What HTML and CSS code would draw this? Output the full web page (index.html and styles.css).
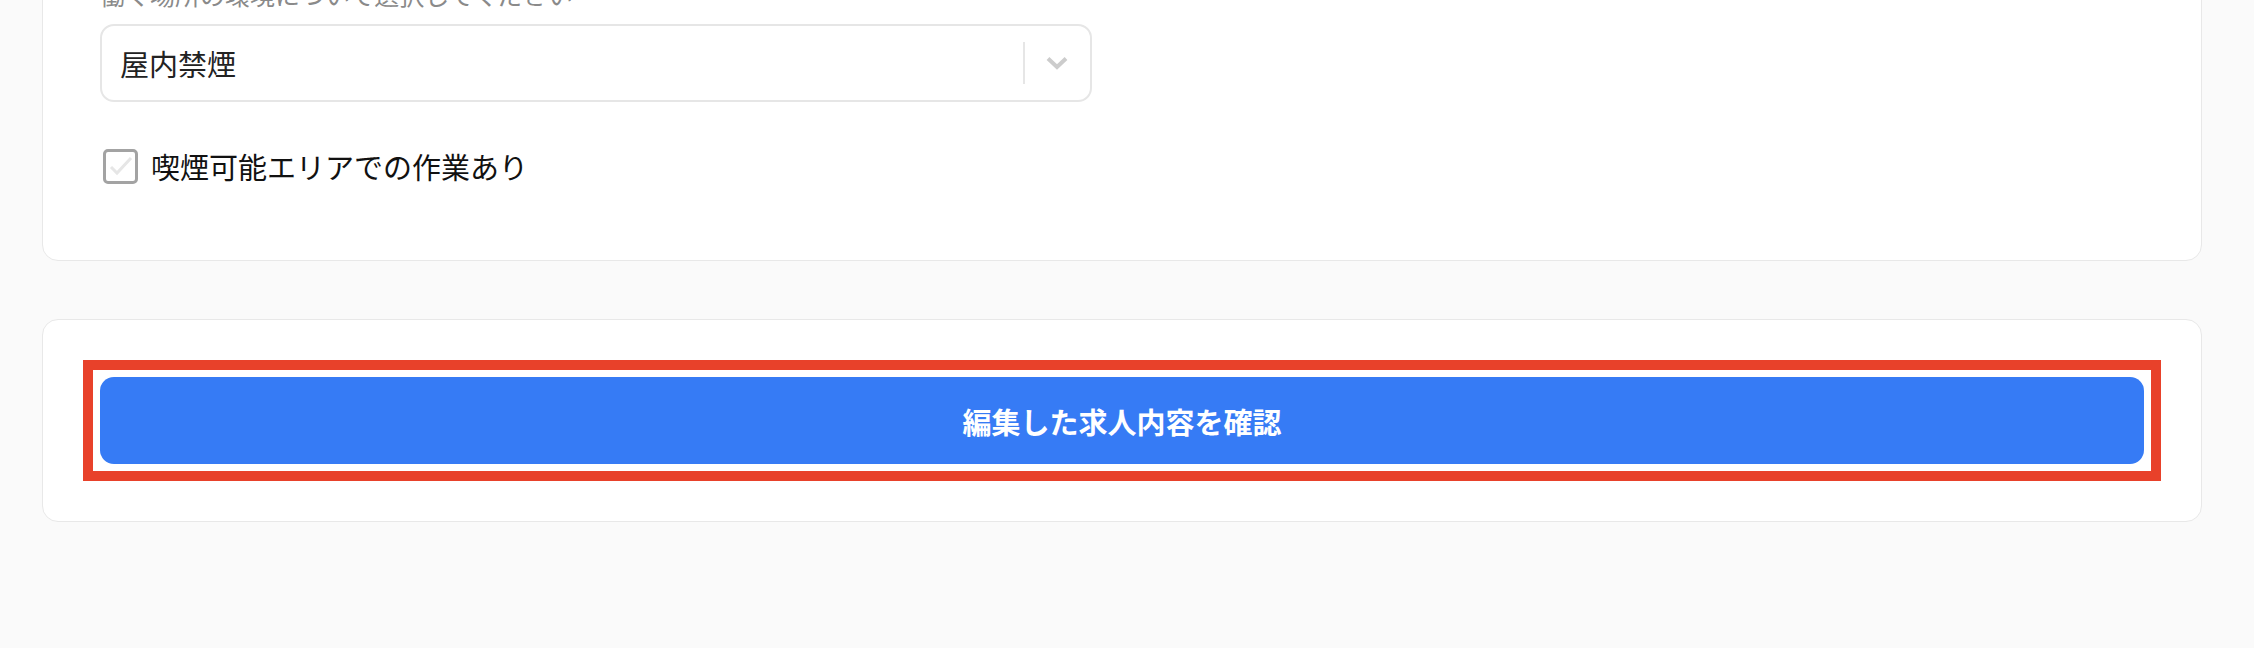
FILE: index.html
```html
<!DOCTYPE html>
<html lang="ja">
<head>
  <meta charset="UTF-8" />
  <meta name="viewport" content="width=device-width, initial-scale=1.0"/>
  <title>求人編集</title>
  <link rel="stylesheet" href="styles.css">
</head>
<body>

<div class="pagina">
  <section class="tarjeta">
    <p class="campo-label">働く場所の環境について選択してください</p>

    <div class="select">
      <div class="select-valor">屋内禁煙</div>
      <div class="select-indicadores">
        <span class="select-separador"></span>
        <svg class="select-flecha" width="24" height="14" viewBox="0 0 24 14">
          <polyline points="3,2.5 12,11 21,2.5" fill="none" stroke="#cccccc" stroke-width="4" />
        </svg>
      </div>
    </div>

    <label class="check-fila">
      <span class="check-caja">
        <svg width="28" height="28" viewBox="0 0 28 28">
          <polyline points="4,15 10,21 24,6" fill="none" stroke="#e6e6e6" stroke-width="3" />
        </svg>
      </span>
      <span class="check-texto">喫煙可能エリアでの作業あり</span>
    </label>
  </section>

  <section class="tarjeta tarjeta-accion">
    <!-- marco rojo de resaltado alrededor del botón -->
    <div class="resaltado">
      <button class="boton-confirmar">編集した求人内容を確認</button>
    </div>
  </section>
</div>

</body>
</html>
```

FILE: styles.css
```css
body {
  font-family: "Noto Sans CJK JP", "Noto Sans", sans-serif;
  background-color: #fafafa;
  margin: 0;
  padding: 0;
  color: #1a1a1a;
}

.pagina {
  margin-top: -82px;
  padding: 0 52px 0 42px;
}

.tarjeta {
  background-color: #ffffff;
  border: 1px solid #e8e8e8;
  border-radius: 16px;
  padding: 57px 57px 70px;
  margin-bottom: 58px;
}

.campo-label {
  margin: 0 0 12px;
  font-size: 25px;
  line-height: 36px;
  color: #8a8a8a;
}

.select {
  display: flex;
  align-items: center;
  width: 988px;
  height: 74px;
  border: 2px solid #e6e6e6;
  border-radius: 14px;
  background-color: #ffffff;
}

.select-valor {
  flex: 1;
  padding-left: 18px;
  font-size: 29px;
  color: #222222;
}

.select-indicadores {
  display: flex;
  align-items: center;
  height: 100%;
}

.select-separador {
  width: 2px;
  height: 42px;
  background-color: #e6e6e6;
}

.select-flecha {
  display: block;
  margin: 0 21px 0 20px;
}

.check-fila {
  display: flex;
  align-items: center;
  gap: 13px;
  height: 48px;
  margin-top: 40px;
  margin-left: 3px;
}

.check-caja {
  display: flex;
  align-items: center;
  justify-content: center;
  box-sizing: border-box;
  width: 35px;
  height: 35px;
  border: 3px solid #a3a3a3;
  border-radius: 5px;
  background-color: #ffffff;
}

.check-caja svg {
  display: block;
}

.check-texto {
  font-size: 29px;
  color: #111111;
}

.tarjeta-accion {
  padding: 57px;
}

.resaltado {
  outline: 10px solid #e8412a;
  outline-offset: 7px;
}

.boton-confirmar {
  display: block;
  width: 100%;
  height: 87px;
  border: none;
  border-radius: 14px;
  background-color: #367bf5;
  color: #ffffff;
  font-family: inherit;
  font-size: 29px;
  font-weight: bold;
  cursor: pointer;
}
```
